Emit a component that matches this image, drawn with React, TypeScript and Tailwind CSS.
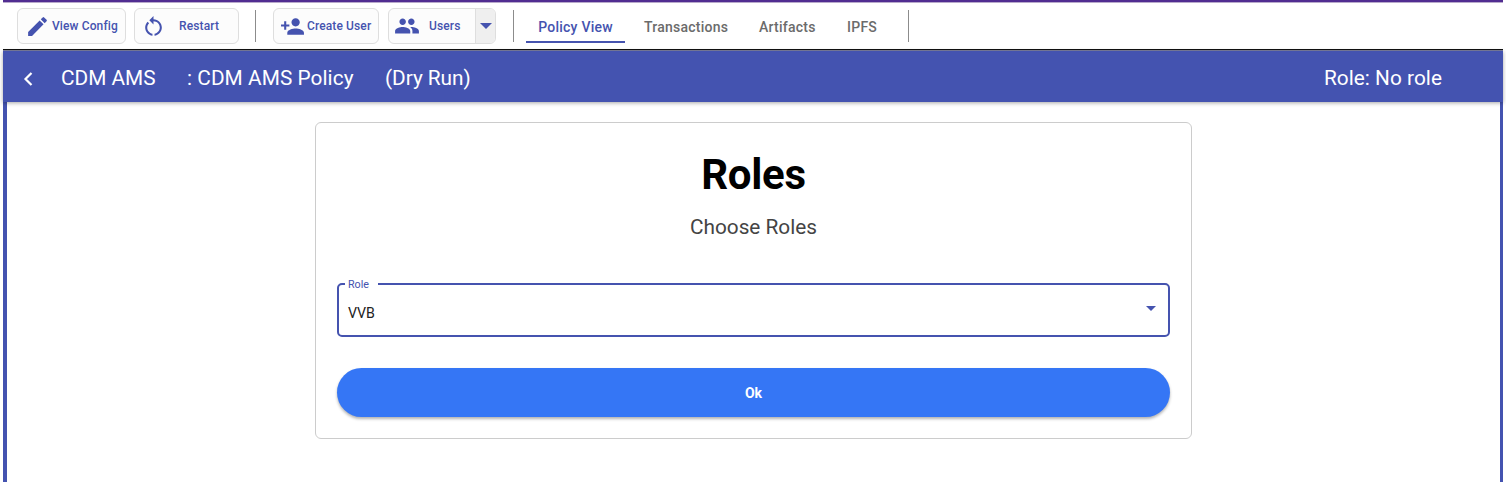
import React from "react";

const font = "font-['Roboto','Liberation_Sans',sans-serif]";

function Icon({ d, className }: { d: string; className: string }) {
  return (
    <svg viewBox="0 0 24 24" fill="currentColor" className={className}>
      <path d={d} />
    </svg>
  );
}

const PENCIL =
  "M3 17.25V21h3.75L17.81 9.94l-3.75-3.75L3 17.25zM20.71 7.04a.996.996 0 0 0 0-1.41l-2.34-2.34a.996.996 0 0 0-1.41 0l-1.83 1.83 3.75 3.75 1.83-1.83z";
const RESTART =
  "M12 5V2L8 6l4 4V7c3.31 0 6 2.69 6 6 0 2.97-2.17 5.43-5 5.91v2.02c3.95-.49 7-3.85 7-7.93 0-4.42-3.58-8-8-8zm-6 8c0-1.65.67-3.15 1.76-4.24L6.34 7.34C4.9 8.79 4 10.79 4 13c0 4.08 3.05 7.44 7 7.93v-2.02c-2.83-.48-5-2.94-5-5.91z";
const PERSON_ADD =
  "M15 12c2.21 0 4-1.79 4-4s-1.79-4-4-4-4 1.79-4 4 1.79 4 4 4zm-9-2V7H4v3H1v2h3v3h2v-3h3v-2H6zm9 4c-2.67 0-8 1.34-8 4v2h16v-2c0-2.66-5.33-4-8-4z";
const PEOPLE =
  "M16 11c1.66 0 2.99-1.34 2.99-3S17.66 5 16 5s-3 1.34-3 3 1.34 3 3 3zm-8 0c1.66 0 2.99-1.34 2.99-3S9.66 5 8 5 5 6.34 5 8s1.34 3 3 3zm0 2c-2.33 0-7 1.17-7 3.5V19h14v-2.5c0-2.33-4.67-3.5-7-3.5zm8 0c-.29 0-.62.02-.97.05 1.16.84 1.97 1.97 1.97 3.45V19h6v-2.5c0-2.33-4.67-3.5-7-3.5z";

const button =
  "flex h-[36px] shrink-0 items-center rounded-[6px] border border-[#dedede] bg-[#fcfcfc] text-[12px] font-medium tracking-[0.12px] text-[#4553af]";

function Divider({ className }: { className: string }) {
  return <div className={`h-8 w-px shrink-0 bg-[#8c8c8c] ${className}`} />;
}

function Toolbar() {
  return (
    <div className="flex h-[46px] items-start pt-[5px] pl-[14px] whitespace-nowrap">
      <button className={`${button} w-[109px] pl-[7px]`}>
        <Icon d={PENCIL} className="mr-[2px] size-[25px] shrink-0" />
        <span>View Config</span>
      </button>
      <button className={`${button} ml-[8px] w-[105px] pl-[6px]`}>
        <Icon d={RESTART} className="mr-[13px] size-[25px] shrink-0" />
        <span>Restart</span>
      </button>
      <Divider className="ml-[16px] mt-[2px]" />
      <button className={`${button} ml-[17px] w-[106px] pl-[6px]`}>
        <Icon d={PERSON_ADD} className="mr-[2px] size-[25px] shrink-0" />
        <span>Create User</span>
      </button>
      <div className={`${button} ml-[9px] w-[108px] overflow-hidden pl-[5px]`}>
        <Icon d={PEOPLE} className="mr-[9px] size-[26px] shrink-0" />
        <span>Users</span>
        <button className="ml-auto flex h-full w-5 items-center justify-center border-l border-[#dedede] bg-[#efefef]">
          <svg viewBox="0 0 12 6" fill="currentColor" className="h-[6px] w-3">
            <path d="M0 0h12L6 6z" />
          </svg>
        </button>
      </div>
      <Divider className="ml-[17px] mt-[2px]" />
      <nav className="ml-[12px] flex h-[35px] text-[14px] leading-[38px] font-medium tracking-[0.24px] text-[#6b6b6b]">
        <div className="w-[99px] border-b-2 border-[#4553af] text-center text-[#4553af]">
          Policy View
        </div>
        <div className="ml-[19px] w-[115px]">Transactions</div>
        <div className="w-[88px]">Artifacts</div>
        <div className="w-[61px]">IPFS</div>
      </nav>
      <Divider className="mt-[2px]" />
    </div>
  );
}

export default function App() {
  return (
    <div className={`${font} h-[482px] overflow-hidden bg-white px-[3px]`}>
      <div className="h-[3px] border-b border-[#b8a9cb] bg-[#512d91]" />
      <Toolbar />
      <div className="h-[2px] border-b border-[#7d80a0] bg-[#111111]" />
      <header className="relative flex h-[51px] items-center bg-[#4453b0] pt-[4px] text-[20.8px] whitespace-nowrap text-white shadow-[0_1px_4px_rgba(0,0,0,0.35)]">
        <svg
          viewBox="0 0 10 14"
          fill="none"
          stroke="currentColor"
          strokeWidth="2.2"
          className="ml-[20px] h-[14px] w-[10px]"
        >
          <path d="M8.5 1 2.5 7l6 6" />
        </svg>
        <span className="ml-[28px] w-[126px]">CDM AMS</span>
        <span className="w-[198px] tracking-[0.06px]">: CDM AMS Policy</span>
        <span className="tracking-[-0.04px]">(Dry Run)</span>
        <span className="mr-[61px] ml-auto tracking-[0.04px]">Role: No role</span>
      </header>
      <main className="h-[380px] border-r-[3px] border-l-4 border-[#4453b0] pt-[20px]">
        <section className="ml-[308px] h-[317px] w-[877px] rounded-[6px] border border-[#cccccc] px-[21px] text-center">
          <h1 className="pt-[24px] text-[42px] leading-[56px] font-bold tracking-[-0.3px] text-black">
            Roles
          </h1>
          <p className="mt-[11px] text-[20.8px] leading-[27px] text-[#444444]">Choose Roles</p>
          <fieldset className="mt-[36px] flex h-[60px] rounded-[5px] border-2 border-[#4553af] text-left">
            <legend className="ml-[6px] h-[14px] w-[33px] pt-px pl-[3px] text-[10.7px] leading-[14px] text-[#4553af]">
              Role
            </legend>
            <div className="flex flex-1 items-start justify-between pt-[12px] pr-[12px] pl-[9px] text-[14.2px] leading-5 text-[#222222]">
              <span>VVB</span>
              <svg viewBox="0 0 10 5" className="mt-[3px] h-[5px] w-[10px] fill-[#4553af]">
                <path d="M0 0h10L5 5z" />
              </svg>
            </div>
          </fieldset>
          <button className="mt-[31px] h-[49px] w-full rounded-full bg-[#3576f5] pt-[2px] text-[14px] font-bold text-white shadow-[0_2px_3px_rgba(0,0,0,0.3)]">
            Ok
          </button>
        </section>
      </main>
    </div>
  );
}
